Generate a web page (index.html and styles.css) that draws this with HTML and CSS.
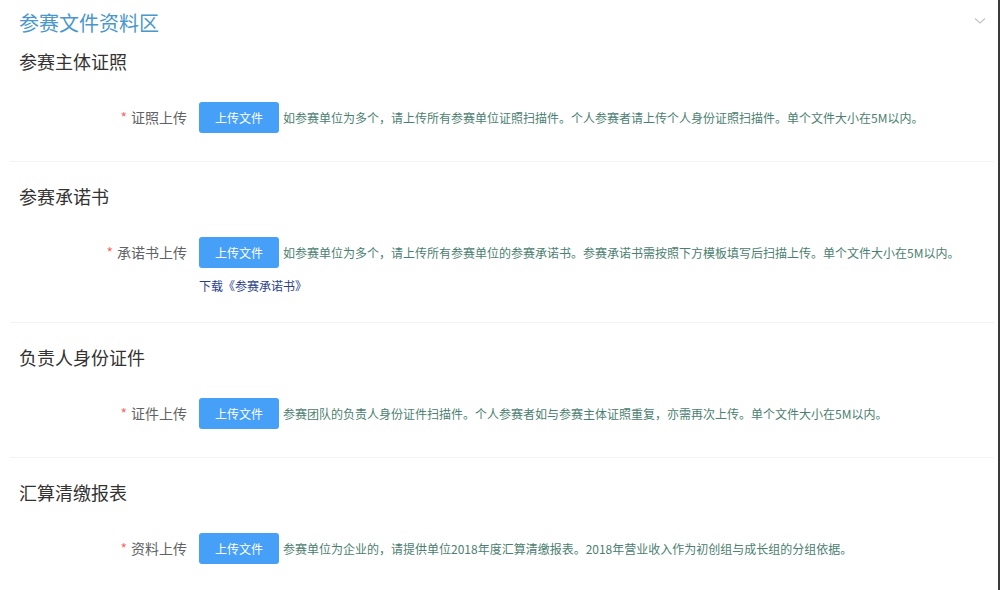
FILE: index.html
```html
<!DOCTYPE html>
<html lang="zh-CN">
<head>
<meta charset="utf-8">
<title>参赛文件资料区</title>
<link rel="stylesheet" href="styles.css">
</head>
<body>
<div class="page">
  <div class="panel-header">
    <h1 class="panel-title">参赛文件资料区</h1>
    <svg class="chevron" width="12" height="8" viewBox="0 0 12 8"><path d="M1 1.5 L6 6 L11 1.5" fill="none" stroke="#c0c4cc" stroke-width="1.2"/></svg>
  </div>

  <section class="section">
    <h2 class="section-title">参赛主体证照</h2>
    <div class="form-row">
      <label class="form-label"><span class="req">*</span>证照上传</label>
      <button class="upload-btn">上传文件</button>
      <span class="hint">如参赛单位为多个，请上传所有参赛单位证照扫描件。个人参赛者请上传个人身份证照扫描件。单个文件大小在5M以内。</span>
    </div>
  </section>

  <section class="section">
    <h2 class="section-title">参赛承诺书</h2>
    <div class="form-row">
      <label class="form-label"><span class="req">*</span>承诺书上传</label>
      <button class="upload-btn">上传文件</button>
      <span class="hint">如参赛单位为多个，请上传所有参赛单位的参赛承诺书。参赛承诺书需按照下方模板填写后扫描上传。单个文件大小在5M以内。</span>
    </div>
    <div class="link-row"><a class="download-link" href="#">下载《参赛承诺书》</a></div>
  </section>

  <section class="section">
    <h2 class="section-title">负责人身份证件</h2>
    <div class="form-row">
      <label class="form-label"><span class="req">*</span>证件上传</label>
      <button class="upload-btn">上传文件</button>
      <span class="hint">参赛团队的负责人身份证件扫描件。个人参赛者如与参赛主体证照重复，亦需再次上传。单个文件大小在5M以内。</span>
    </div>
  </section>

  <section class="section last">
    <h2 class="section-title">汇算清缴报表</h2>
    <div class="form-row">
      <label class="form-label"><span class="req">*</span>资料上传</label>
      <button class="upload-btn">上传文件</button>
      <span class="hint">参赛单位为企业的，请提供单位2018年度汇算清缴报表。2018年营业收入作为初创组与成长组的分组依据。</span>
    </div>
  </section>
</div>
</body>
</html>
```

FILE: styles.css
```css
html, body {
  margin: 0;
  padding: 0;
  background: #ffffff;
}

body {
  font-family: "Noto Sans CJK SC", "Noto Sans", "Liberation Sans", sans-serif;
}

.page {
  width: 1000px;
  height: 590px;
  box-sizing: border-box;
  border-right: 2px solid #3a3a3a;
  overflow: hidden;
}

.panel-header {
  display: flex;
  justify-content: space-between;
  align-items: center;
  padding: 13px 12px 0 19px;
  height: 20px;
}

.panel-title {
  margin: 0;
  font-size: 20px;
  line-height: 20px;
  font-weight: 400;
  color: #4a97cc;
}

.chevron {
  display: block;
  margin-top: -4px;
}

.section {
  margin: 0 4px 0 10px;
  padding: 24px 0 28px 9px;
  border-bottom: 1px solid #f4f4f4;
}

.section:first-of-type {
  padding-top: 18px;
}

.section.last {
  border-bottom: none;
}

.section-title {
  margin: 0 0 30px 0;
  font-size: 18px;
  line-height: 20px;
  font-weight: 400;
  color: #333333;
}

.form-row {
  display: flex;
  align-items: center;
  height: 32px;
}

.form-label {
  width: 180px;
  box-sizing: border-box;
  padding-right: 12px;
  text-align: right;
  font-size: 14px;
  color: #606266;
  white-space: nowrap;
}

.req {
  color: #f56c6c;
  margin-right: 4px;
}

.upload-btn {
  width: 80px;
  height: 31px;
  border: none;
  border-radius: 3px;
  background: #46a0f7;
  color: #ffffff;
  font-family: inherit;
  font-size: 12px;
  padding: 0;
  margin-right: 4px;
  flex-shrink: 0;
}

.hint {
  font-size: 12px;
  color: #4b8070;
  white-space: nowrap;
}

.link-row {
  margin-top: 8px;
  padding-left: 180px;
  line-height: 16px;
}

.download-link {
  font-size: 12px;
  color: #2a3f8c;
  text-decoration: none;
}
```
